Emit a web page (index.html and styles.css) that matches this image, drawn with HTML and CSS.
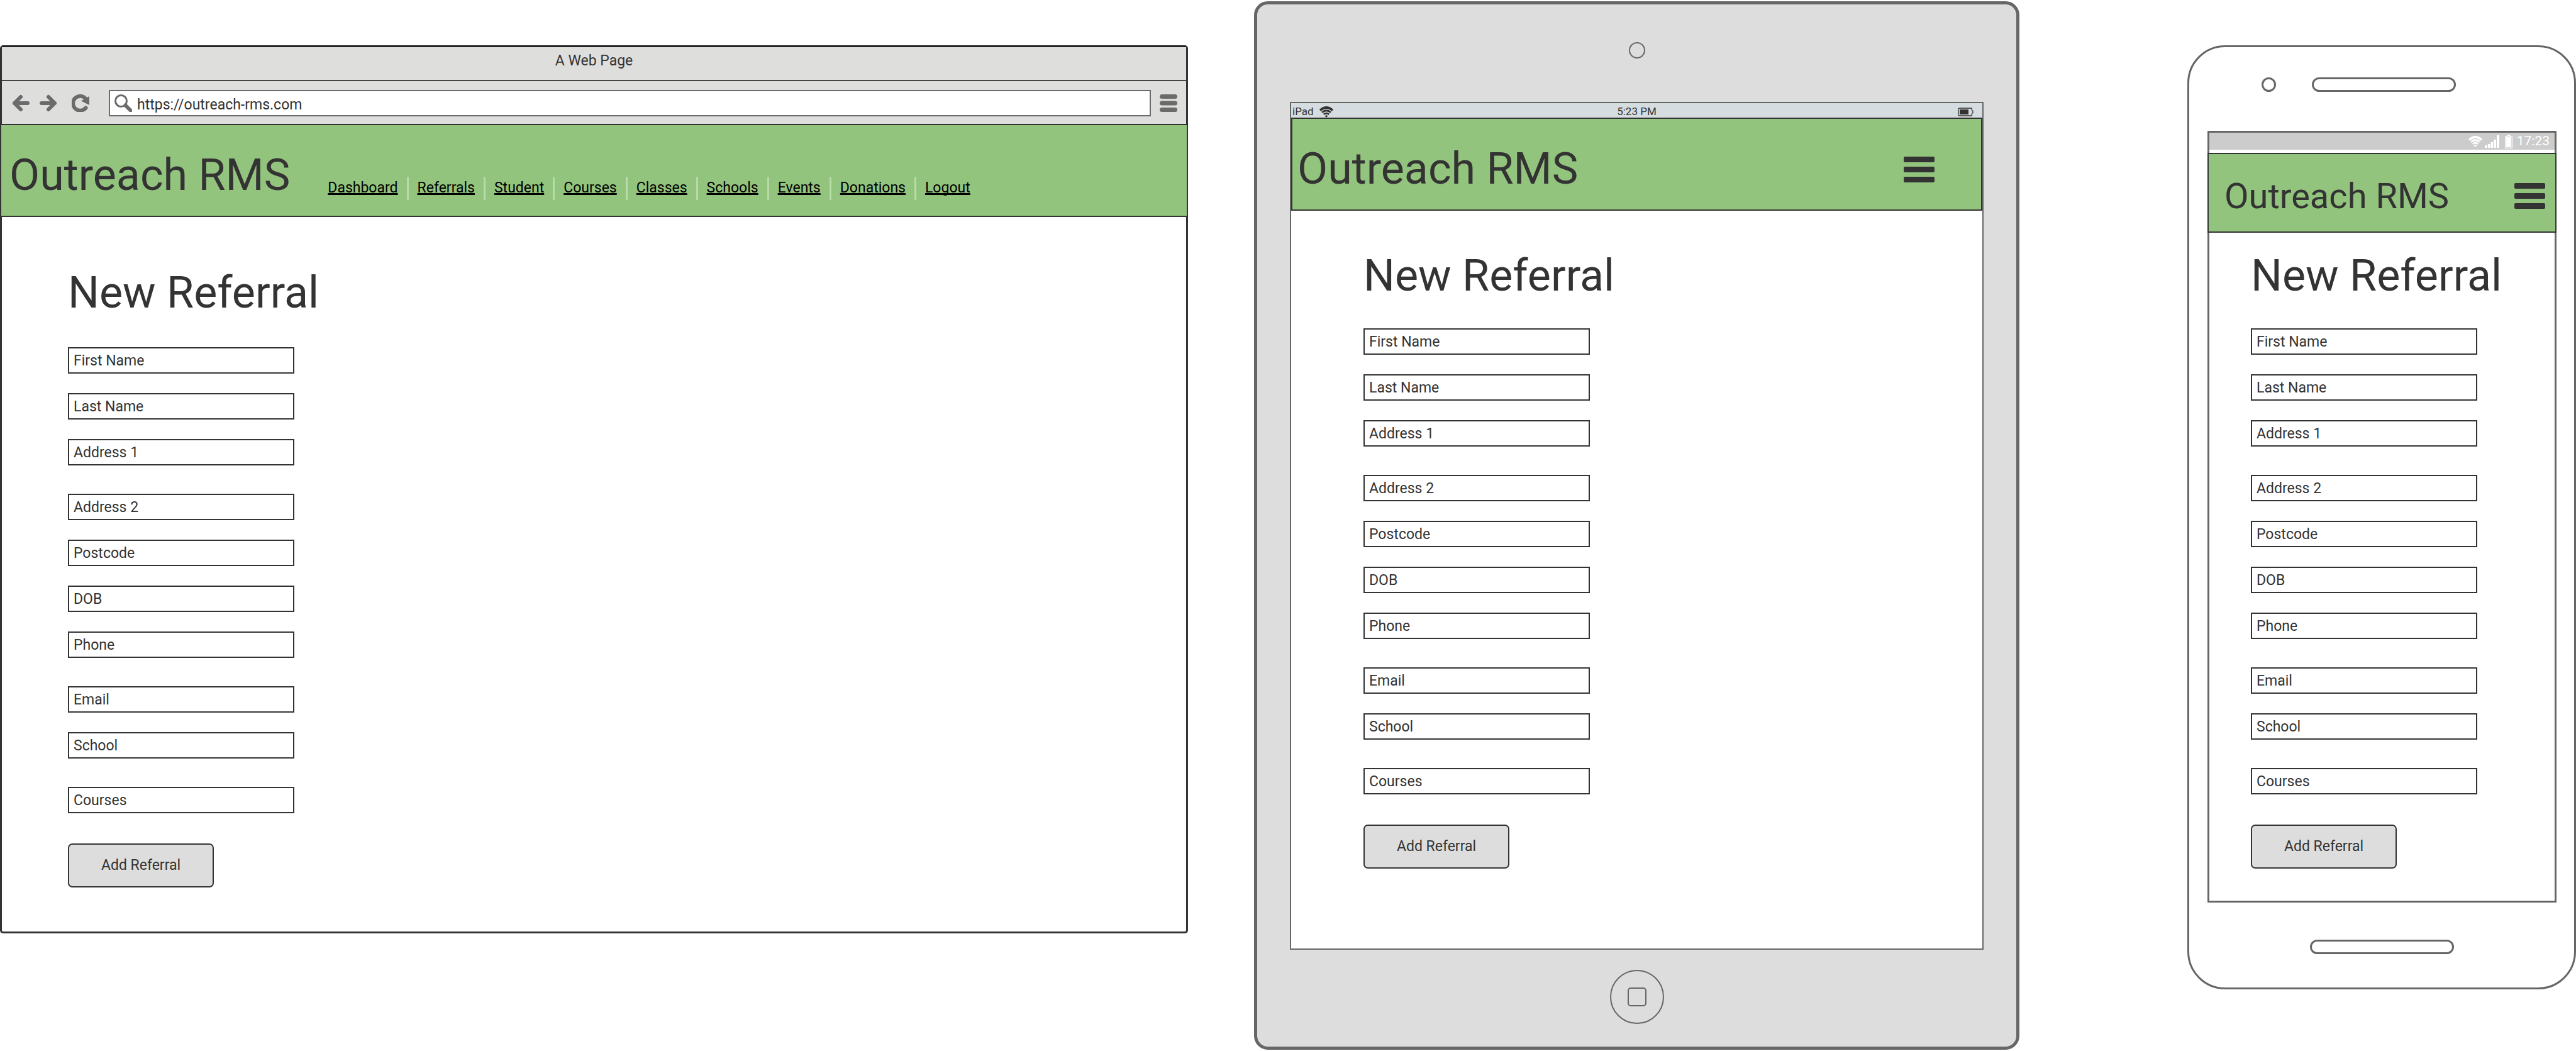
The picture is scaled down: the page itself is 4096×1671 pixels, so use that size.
FILE: index.html
```html
<!DOCTYPE html>
<html lang="en">
<head>
<meta charset="utf-8">
<title>Outreach RMS - New Referral</title>
<link rel="stylesheet" href="styles.css">
</head>
<body>
<svg class="sprite" aria-hidden="true">
  <symbol id="bars" viewBox="0 0 49 41">
    <rect width="49" height="9" rx="2"/><rect y="16" width="49" height="9" rx="2"/><rect y="32" width="49" height="9" rx="2"/>
  </symbol>
  <symbol id="wifi" viewBox="0 0 24 18">
    <path d="M2 6.500Q12 -2.500 22 6.500" fill="none" stroke="currentColor" stroke-width="3.600"/>
    <path d="M5 9.800Q12 3.800 19 9.800" fill="none" stroke="currentColor" stroke-width="2.800"/>
    <path d="M7.800 12.900Q12 9.200 16.200 12.900" fill="none" stroke="currentColor" stroke-width="2.600"/>
    <path d="M9.700 15.300Q12 13.200 14.300 15.300L12 18Z"/>
  </symbol>
</svg>

<main class="stage">
  <section class="browser">
    <div class="browser-title">A Web Page</div>
    <div class="toolbar">
      <button class="tool" type="button" aria-label="Back"><svg viewBox="0 0 28 28"><path d="M14 4L4 14L14 24M4 14H25" class="line"/></svg></button>
      <button class="tool" type="button" aria-label="Forward"><svg viewBox="0 0 28 28"><path d="M14 4L24 14L14 24M24 14H3" class="line"/></svg></button>
      <button class="tool tool-reload" type="button" aria-label="Reload"><svg viewBox="0 0 28 28"><path d="M22.500 21.500A11.500 11.500 0 1 1 22 6.500" class="line"/><path d="M28 3V17L15 10.500Z"/></svg></button>
      <label class="address">
        <svg viewBox="0 0 28 28" aria-hidden="true"><circle cx="10.500" cy="10.500" r="9" class="thin"/><path d="M17.500 17.500L25.500 25.500" class="line"/></svg>
        <input type="text" value="https://outreach-rms.com" aria-label="Address">
      </label>
      <button class="tool" type="button" aria-label="Menu"><svg viewBox="0 0 28 28"><rect width="28" height="7" rx="3.500"/><rect y="10.500" width="28" height="7" rx="3.500"/><rect y="21" width="28" height="7" rx="3.500"/></svg></button>
    </div>
    <header class="site-header">
      <div class="logo">Outreach RMS</div>
      <nav class="nav">
        <a href="#">Dashboard</a><i></i><a href="#">Referrals</a><i></i><a href="#">Student</a><i></i><a href="#">Courses</a><i></i><a href="#">Classes</a><i></i><a href="#">Schools</a><i></i><a href="#">Events</a><i></i><a href="#">Donations</a><i></i><a href="#">Logout</a>
      </nav>
    </header>
    <form class="referral">
      <h1>New Referral</h1>
      <div class="group">
        <input type="text" placeholder="First Name" aria-label="First Name">
        <input type="text" placeholder="Last Name" aria-label="Last Name">
        <input type="text" placeholder="Address 1" aria-label="Address 1">
      </div>
      <div class="group">
        <input type="text" placeholder="Address 2" aria-label="Address 2">
        <input type="text" placeholder="Postcode" aria-label="Postcode">
        <input type="text" placeholder="DOB" aria-label="DOB">
        <input type="text" placeholder="Phone" aria-label="Phone">
      </div>
      <div class="group">
        <input type="text" placeholder="Email" aria-label="Email">
        <input type="text" placeholder="School" aria-label="School">
      </div>
      <div class="group">
        <input type="text" placeholder="Courses" aria-label="Courses">
      </div>
      <button class="submit" type="button">Add Referral</button>
    </form>
  </section>

  <section class="tablet">
    <div class="tablet-camera"></div>
    <div class="tablet-screen">
      <div class="tablet-status">
        <span class="carrier">iPad <svg class="wifi" aria-hidden="true"><use href="#wifi"/></svg></span>
        <span>5:23 PM</span>
        <span class="power"><svg viewBox="0 0 25 14" aria-hidden="true"><path d="M2.500 1H21.500Q22.500 1 22.500 2V4.500L24 5.500V8.500L22.500 9.500V12Q22.500 13 21.500 13H2.500Q1 13 1 11.500V2.500Q1 1 2.500 1Z" fill="none" stroke="currentColor" stroke-width="1.300"/><rect x="3" y="3" width="14" height="8"/></svg></span>
      </div>
      <header class="site-header">
        <div class="logo">Outreach RMS</div>
        <button class="menu" type="button" aria-label="Menu"><svg><use href="#bars"/></svg></button>
      </header>
      <form class="referral">
        <h1>New Referral</h1>
        <div class="group">
          <input type="text" placeholder="First Name" aria-label="First Name">
          <input type="text" placeholder="Last Name" aria-label="Last Name">
          <input type="text" placeholder="Address 1" aria-label="Address 1">
        </div>
        <div class="group">
          <input type="text" placeholder="Address 2" aria-label="Address 2">
          <input type="text" placeholder="Postcode" aria-label="Postcode">
          <input type="text" placeholder="DOB" aria-label="DOB">
          <input type="text" placeholder="Phone" aria-label="Phone">
        </div>
        <div class="group">
          <input type="text" placeholder="Email" aria-label="Email">
          <input type="text" placeholder="School" aria-label="School">
        </div>
        <div class="group">
          <input type="text" placeholder="Courses" aria-label="Courses">
        </div>
        <button class="submit" type="button">Add Referral</button>
      </form>
    </div>
    <button class="home" type="button" aria-label="Home"><span></span></button>
  </section>

  <section class="phone">
    <div class="phone-top"><div class="phone-camera"></div><div class="pill"></div></div>
    <div class="phone-screen">
      <div class="phone-status">
        <svg class="wifi" aria-hidden="true"><use href="#wifi"/></svg>
        <svg class="signal" viewBox="0 0 23 20" aria-hidden="true"><path d="M0 16H4V20H0ZM5 14H8.500V20H5ZM9.500 11H13V20H9.500ZM14 7H18V20H14ZM19 0H23V20H19Z"/></svg>
        <svg class="cell" viewBox="0 0 12 22" aria-hidden="true"><path d="M3.500 2V.5H8.500V2H11Q12 2 12 3V21Q12 22 11 22H1Q0 22 0 21V3Q0 2 1 2Z"/><rect x="1.700" y="3.700" width="8.600" height="16.600" fill="none" stroke="#ccc" stroke-width=".8"/></svg>
        <span>17:23</span>
      </div>
      <header class="site-header">
        <div class="logo">Outreach RMS</div>
        <button class="menu" type="button" aria-label="Menu"><svg><use href="#bars"/></svg></button>
      </header>
      <form class="referral">
        <h1>New Referral</h1>
        <div class="group">
          <input type="text" placeholder="First Name" aria-label="First Name">
          <input type="text" placeholder="Last Name" aria-label="Last Name">
          <input type="text" placeholder="Address 1" aria-label="Address 1">
        </div>
        <div class="group">
          <input type="text" placeholder="Address 2" aria-label="Address 2">
          <input type="text" placeholder="Postcode" aria-label="Postcode">
          <input type="text" placeholder="DOB" aria-label="DOB">
          <input type="text" placeholder="Phone" aria-label="Phone">
        </div>
        <div class="group">
          <input type="text" placeholder="Email" aria-label="Email">
          <input type="text" placeholder="School" aria-label="School">
        </div>
        <div class="group">
          <input type="text" placeholder="Courses" aria-label="Courses">
        </div>
        <button class="submit" type="button">Add Referral</button>
      </form>
    </div>
    <div class="pill"></div>
  </section>
</main>
</body>
</html>
```
FILE: styles.css
```css
* { box-sizing: border-box; }

body {
  margin: 0;
  background: #fff;
  color: #333;
  font: 23px/28px Roboto, "Liberation Sans", sans-serif;
}

button, input { font: inherit; color: inherit; }
button { padding: 0; border: 0; background: none; }
svg { display: block; fill: currentColor; }
.sprite { display: none; }

.stage {
  display: grid;
  grid-template-columns: 1889fr 105fr 1217fr 267fr 618fr;
  align-items: start;
}

/* Desktop browser window */
.browser {
  grid-column: 1;
  margin-top: 72px;
  border: 3px solid #333;
  border-top-color: #231f20;
  border-radius: 5px;
}
.browser-title {
  padding-bottom: 8px;
  border-bottom: 2px solid #444;
  background: #dededd;
  line-height: 44px;
  text-align: center;
}
.toolbar {
  display: flex;
  align-items: center;
  gap: 16px;
  padding: 14px 14px 12px 16px;
  background: #dededd;
  color: #6b6b6b;
}
.tool svg { width: 28px; height: 28px; }
.tool-reload { margin: 0 15px 0 7px; }
.line { fill: none; stroke: currentColor; stroke-width: 6; stroke-linecap: round; stroke-linejoin: round; }
.thin { fill: none; stroke: currentColor; stroke-width: 3; }
.address {
  display: flex;
  flex: 1;
  align-items: center;
  gap: 8px;
  height: 42px;
  padding-left: 7px;
  margin-right: -2px;
  border: 2px solid #6b6b6b;
  background: #fff;
}
.address svg { width: 28px; height: 28px; }
.address input {
  flex: 1;
  padding: 5px 0 0;
  border: 0;
  background: none;
  color: #333;
}

/* Green site header */
.site-header {
  display: flex;
  align-items: flex-start;
  padding: 38px 74px 24px 8px;
  border: 2px solid #333;
  background: #93c47d;
}
.browser .site-header { margin: 0 -3px; padding-left: 13px; }
.logo { font-size: 70px; line-height: 82px; white-space: nowrap; }
.nav {
  display: flex;
  gap: 14px;
  margin: 44px 0 0 60px;
}
.nav a {
  color: #000;
  line-height: 35px;
  text-decoration-thickness: 3px;
  text-decoration-skip-ink: none;
  text-underline-offset: 1px;
}
.nav i { width: 3px; height: 37px; border-radius: 2px; background: #b8dca9; }
.menu { margin: 22px 0 0 auto; }
.menu svg { width: 49px; height: 41px; }

/* Referral form */
.referral { padding: 79px 0 70px 105px; }
h1 {
  margin: 0 0 46px;
  font-size: 70px;
  font-weight: 400;
  line-height: 82px;
  white-space: nowrap;
}
.group {
  display: grid;
  gap: 31px;
  width: 360px;
  margin-bottom: 45px;
}
.group input {
  width: 100%;
  height: 42px;
  padding: 0 7px;
  border: 2px solid #333;
  border-radius: 0;
  background: #fff;
}
.group input::placeholder { color: #333; opacity: 1; }
.submit {
  display: block;
  width: 232px;
  height: 70px;
  margin-top: 48px;
  border: 2px solid #333;
  border-radius: 7px;
  background: #ddd;
}

/* Tablet */
.tablet {
  grid-column: 3;
  margin-top: 2px;
  padding: 60px 52px 36px;
  border: 5px solid #666;
  border-radius: 22px;
  background: #ddd;
}
.tablet-camera {
  width: 26px;
  height: 26px;
  margin: 0 auto 69px;
  border: 2px solid #666;
  border-radius: 50%;
}
.tablet-screen { border: 2px solid #666; background: #fff; }
.tablet-status {
  display: grid;
  grid-template-columns: 1fr auto 1fr;
  height: 23px;
  padding: 3px 2px 0;
  background: #d6dde0;
  font-size: 17px;
  line-height: 20px;
}
.carrier { display: flex; gap: 4px; }
.wifi { width: 24px; height: 18px; }
.carrier .wifi { margin: 2px 0 0 4px; }
.power { justify-self: end; padding: 4px 12px 0 0; }
.power svg { width: 25px; height: 14px; }
.tablet .referral { padding: 62px 0 127px 115px; }
.tablet h1, .phone h1 { margin-bottom: 43px; }
.home {
  display: grid;
  place-items: center;
  width: 86px;
  height: 86px;
  margin: 32px auto 0;
  border: 2px solid #666;
  border-radius: 50%;
}
.home span { width: 30px; height: 30px; border: 2px solid #666; border-radius: 5px; }

/* Phone */
.phone {
  grid-column: 5;
  margin-top: 72px;
  padding: 48px 28px 53px 29px;
  border: 3px solid #666;
  border-radius: 60px;
}
.phone-top { display: flex; gap: 57px; margin: 0 0 62px 86px; }
.phone-camera { width: 23px; height: 23px; border: 3px solid #666; border-radius: 50%; }
.pill { width: 229px; height: 23px; border: 3px solid #666; border-radius: 12px; }
.phone > .pill { margin: 59px auto 0; }
.phone-screen { border: 3px solid #666; }
.phone-status {
  display: flex;
  align-items: center;
  justify-content: flex-end;
  height: 27px;
  margin-bottom: 5px;
  padding-right: 8px;
  background: #ccc;
  color: #fff;
  font-size: 21px;
  line-height: 27px;
}
.signal { width: 23px; height: 20px; margin: 0 9px 0 3px; }
.cell { width: 12px; height: 22px; margin-right: 7px; }
.phone .site-header { margin: 0 -3px; padding: 34px 16px 23px 25px; }
.phone .logo { font-size: 56px; line-height: 66px; }
.phone .menu { margin-top: 12px; }
.phone .referral { padding: 27px 0 51px 66px; }
```
